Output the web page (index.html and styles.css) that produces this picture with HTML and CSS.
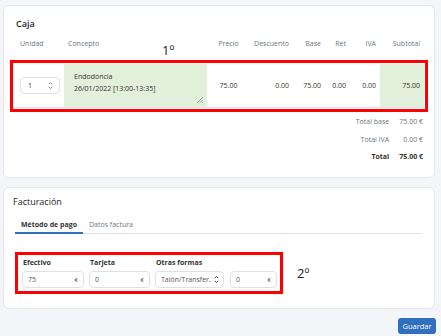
FILE: index.html
```html
<!DOCTYPE html>
<html lang="es">
<head>
    <meta charset="UTF-8">
    <meta name="viewport" content="width=device-width, initial-scale=1.0">
    <title>Caja</title>
    <link rel="stylesheet" href="styles.css">
</head>
<body>
    <div class="page">
        <section class="card caja">
            <h2 class="card-title">Caja</h2>
            <span class="note note-row">1º</span>

            <div class="cols head">
                <div>Unidad</div>
                <div>Concepto</div>
                <div class="c">Precio</div>
                <div class="r">Descuento</div>
                <div class="r">Base</div>
                <div class="r">Ret</div>
                <div class="r">IVA</div>
                <div class="r">Subtotal</div>
            </div>

            <div class="mark mark-row">
                <div class="cols line">
                    <div class="cell-unit">
                        <div class="field unit-field">
                            <span>1</span>
                            <svg class="spin" width="5" height="9" viewBox="0 0 5 9"><path d="M0.8 3.2 L2.5 1.5 L4.2 3.2 M0.8 5.8 L2.5 7.5 L4.2 5.8" fill="none" stroke="#6c757d" stroke-width="0.9"/></svg>
                        </div>
                    </div>
                    <div class="cell-concept">
                        <p>Endodoncia</p>
                        <p>26/01/2022 [13:00-13:35]</p>
                        <svg class="grip" width="7" height="7" viewBox="0 0 7 7"><path d="M7 1 L1 7 M7 3.5 L3.5 7 M7 6 L6 7" stroke="#9aa0a6" stroke-width="0.9"/></svg>
                    </div>
                    <div class="c">75.00</div>
                    <div class="r">0.00</div>
                    <div class="r">75.00</div>
                    <div class="r">0.00</div>
                    <div class="r">0.00</div>
                    <div class="r cell-subtotal">75.00</div>
                </div>
            </div>

            <div class="totals">
                <span>Total base</span><span>75.00 €</span>
                <span>Total IVA</span><span>0.00 €</span>
                <span class="strong">Total</span><span class="strong">75.00 €</span>
            </div>
        </section>

        <section class="card billing">
            <h2 class="card-title light">Facturación</h2>
            <div class="tabs">
                <span class="tab active">Método de pago</span>
                <span class="tab">Datos factura</span>
            </div>

            <div class="pay-row">
                <div class="mark mark-pay">
                    <div class="pay-field">
                        <label>Efectivo</label>
                        <div class="field money w1"><span>75</span><span class="eur">€</span></div>
                    </div>
                    <div class="pay-field">
                        <label>Tarjeta</label>
                        <div class="field money w2"><span>0</span><span class="eur">€</span></div>
                    </div>
                    <div class="pay-field">
                        <label>Otras formas</label>
                        <div class="field select w3">
                            <span>Talón/Transfer.</span>
                            <svg width="5" height="9" viewBox="0 0 5 9"><path d="M0.8 3.2 L2.5 1.5 L4.2 3.2 M0.8 5.8 L2.5 7.5 L4.2 5.8" fill="none" stroke="#333" stroke-width="0.9"/></svg>
                        </div>
                    </div>
                    <div class="pay-field">
                        <label>&nbsp;</label>
                        <div class="field money w4"><span>0</span><span class="eur">€</span></div>
                    </div>
                </div>
                <span class="note">2º</span>
            </div>
        </section>

        <div class="actions">
            <button class="btn">Guardar</button>
        </div>
    </div>
</body>
</html>
```

FILE: styles.css
```css
* {
    margin: 0;
    padding: 0;
    box-sizing: border-box;
}

body {
    font-family: "Open Sans", "Noto Sans", sans-serif;
    font-size: 7px;
    color: #333;
    background: #f4f5f8;
}

.page {
    width: 441px;
    height: 336px;
    padding: 5px 6px 0 3px;
}

.card {
    background: white;
    border: 1px solid #e4e7eb;
    border-radius: 6px;
    position: relative;
}

.card-title {
    font-size: 9px;
    font-weight: 600;
    line-height: 12px;
    color: #212529;
}

.card-title.light {
    font-weight: 500;
}

/* Caja */
.caja {
    height: 173px;
    padding: 12px 6px 0;
}

.caja .card-title {
    padding-left: 6px;
}

.note {
    font-size: 13px;
    line-height: 14px;
    color: #222;
}

.note-row {
    position: absolute;
    left: 158px;
    top: 37px;
}

.cols {
    display: grid;
    grid-template-columns: 48px 143px 43px 43px 32px 25px 30px 44px;
    align-items: center;
}

.cols > div {
    padding: 0 4px;
}

.cols .c {
    text-align: center;
}

.cols .r {
    text-align: right;
}

.head {
    margin: 8px 4px 0 6px;
    line-height: 12px;
    color: #6c757d;
}

.mark {
    border: 3px solid #f00;
}

.mark-row {
    margin-top: 10px;
    padding: 1px 1px 1px 3px;
}

.line {
    height: 44px;
    border-bottom: 1px solid #dee2e6;
    align-items: stretch;
    color: #333;
}

.line > div {
    display: flex;
    align-items: center;
}

.line > .c {
    justify-content: center;
}

.line > .r {
    justify-content: flex-end;
}

.field {
    display: flex;
    align-items: center;
    justify-content: space-between;
    height: 17px;
    border: 1px solid #dee2e6;
    border-radius: 4px;
    background: white;
    padding: 0 5px;
    color: #333;
}

.unit-field {
    width: 40px;
    padding: 0 6px 0 7px;
}

.cell-concept {
    background: #e2efda;
    position: relative;
    flex-direction: column;
    align-items: flex-start !important;
    justify-content: flex-start;
    padding: 7px 10px 0 !important;
    line-height: 12px;
}

.grip {
    position: absolute;
    right: 4px;
    bottom: 4px;
}

.cell-subtotal {
    background: #e2efda;
}

.totals {
    display: grid;
    grid-template-columns: auto auto;
    justify-content: end;
    column-gap: 10px;
    margin-top: 1px;
    padding-right: 5px;
    line-height: 17.5px;
    color: #6c757d;
    text-align: right;
}

.totals .strong {
    font-weight: 700;
    color: #333;
}

/* Facturación */
.billing {
    margin-top: 9px;
    height: 122px;
    padding: 8px 12px 0 11px;
}

.billing .card-title {
    margin-left: -2px;
}

.tabs {
    display: flex;
    margin-top: 10px;
    border-bottom: 1px solid #dee2e6;
}

.tab {
    padding: 1px 6px 1px;
    line-height: 12px;
    color: #6c757d;
    border-bottom: 2px solid transparent;
    margin-bottom: -1px;
}

.tab.active {
    font-weight: 700;
    color: #333;
    border-bottom-color: #2f6fbf;
}

.pay-row {
    display: flex;
    align-items: center;
    gap: 14px;
    margin-top: 18px;
}

.mark-pay {
    display: flex;
    gap: 5px;
    padding: 2px 3px 3px 4px;
}

.pay-field label {
    display: block;
    font-weight: 700;
    line-height: 12px;
    padding-left: 1px;
    margin-bottom: 2px;
    color: #333;
}

.money {
    color: #555;
}

.eur {
    font-size: 6px;
    color: #555;
}

.w1 { width: 62px; }
.w2 { width: 61px; }
.w3 { width: 69px; padding-right: 4px; }
.w4 { width: 47px; margin-left: 1px; }

.select span {
    color: #555;
}

.actions {
    display: flex;
    justify-content: flex-end;
    margin: 9px -1px 0 0;
}

.btn {
    font-family: inherit;
    font-size: 7.5px;
    color: white;
    background: #2f6fbf;
    border: none;
    border-radius: 3px;
    width: 38px;
    height: 16px;
}
```
